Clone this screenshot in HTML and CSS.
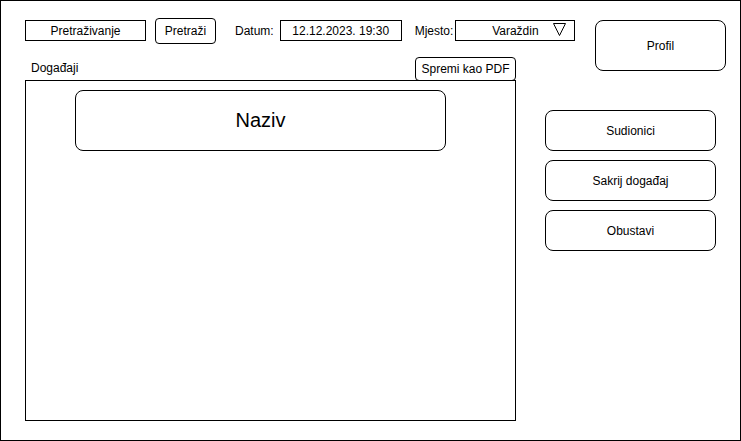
FILE: index.html
```html
<!DOCTYPE html>
<html lang="hr">
<head>
<meta charset="utf-8">
<title>Događaji</title>
<link rel="stylesheet" href="styles.css">
</head>
<body>
<div class="frame">
  <div class="toolbar">
    <div class="box search">Pretraživanje</div>
    <div class="btn search-btn">Pretraži</div>
    <span class="label datum-label">Datum:</span>
    <div class="box date">12.12.2023. 19:30</div>
    <span class="label mjesto-label">Mjesto:</span>
    <div class="box select">
      <span class="select-text">Varaždin</span>
      <svg class="caret" width="13" height="13" viewBox="0 0 13 13"><polygon points="0.5,0.5 12.5,0.5 6.5,12.5" fill="none" stroke="#000" stroke-width="1"/></svg>
    </div>
  </div>
  <div class="btn profile">Profil</div>
  <div class="list-header">
    <span class="list-title">Događaji</span>
    <div class="btn pdf">Spremi kao PDF</div>
  </div>
  <div class="events">
    <div class="card event">Naziv</div>
  </div>
  <div class="actions">
    <div class="card action">Sudionici</div>
    <div class="card action">Sakrij događaj</div>
    <div class="card action">Obustavi</div>
  </div>
</div>
</body>
</html>
```

FILE: styles.css
```css
* { box-sizing: border-box; }
html, body { margin: 0; padding: 0; background: #fff; }
body {
  font-family: "Liberation Sans", Arial, Helvetica, sans-serif;
  font-size: 12px;
  color: #000;
}
.frame {
  width: 741px;
  height: 441px;
  border: 1px solid #000;
  padding: 16px 0 19px 24px;
  display: grid;
  grid-template-columns: 491px 29px 50px 131px;
  grid-template-rows: 27px 13px 23px 30px 1fr;
}
.toolbar {
  grid-column: 1 / 4;
  grid-row: 1;
  display: flex;
  align-items: center;
}
.box {
  border: 1px solid #000;
  height: 21px;
  display: flex;
  align-items: center;
  justify-content: center;
  line-height: 14px;
}
.btn {
  border: 1px solid #000;
  border-radius: 4px;
  display: flex;
  align-items: center;
  justify-content: center;
}
.search { width: 121px; margin-right: 9px; }
.search-btn { width: 61px; height: 26px; }
.datum-label { margin-left: 19px; margin-right: 6px; }
.date { width: 122px; }
.mjesto-label { margin-left: 13px; margin-right: 2px; }
.select {
  width: 120px;
  display: grid;
  grid-template-columns: 1fr auto 1fr;
  align-items: center;
}
.select-text { grid-column: 2; }
.caret { grid-column: 3; justify-self: end; margin-right: 8px; margin-top: -3px; }
.profile {
  grid-column: 4;
  grid-row: 1 / 4;
  align-self: start;
  margin-top: 3px;
  width: 131px;
  height: 51px;
  border-radius: 8px;
}
.list-header {
  grid-column: 1;
  grid-row: 3;
  display: flex;
  justify-content: space-between;
  align-items: flex-start;
}
.list-title { padding: 4px 0 0 6px; line-height: 14px; }
.pdf { width: 101px; height: 24px; }
.events {
  grid-column: 1;
  grid-row: 4 / 6;
  border: 1px solid #000;
  padding: 9px 0 0 49px;
}
.card {
  border: 1px solid #000;
  border-radius: 8px;
  display: flex;
  align-items: center;
  justify-content: center;
}
.event { width: 371px; height: 61px; font-size: 20px; }
.actions {
  grid-column: 3 / 5;
  grid-row: 5;
  display: flex;
  flex-direction: column;
  gap: 9px;
}
.action { width: 171px; height: 41px; }
```
